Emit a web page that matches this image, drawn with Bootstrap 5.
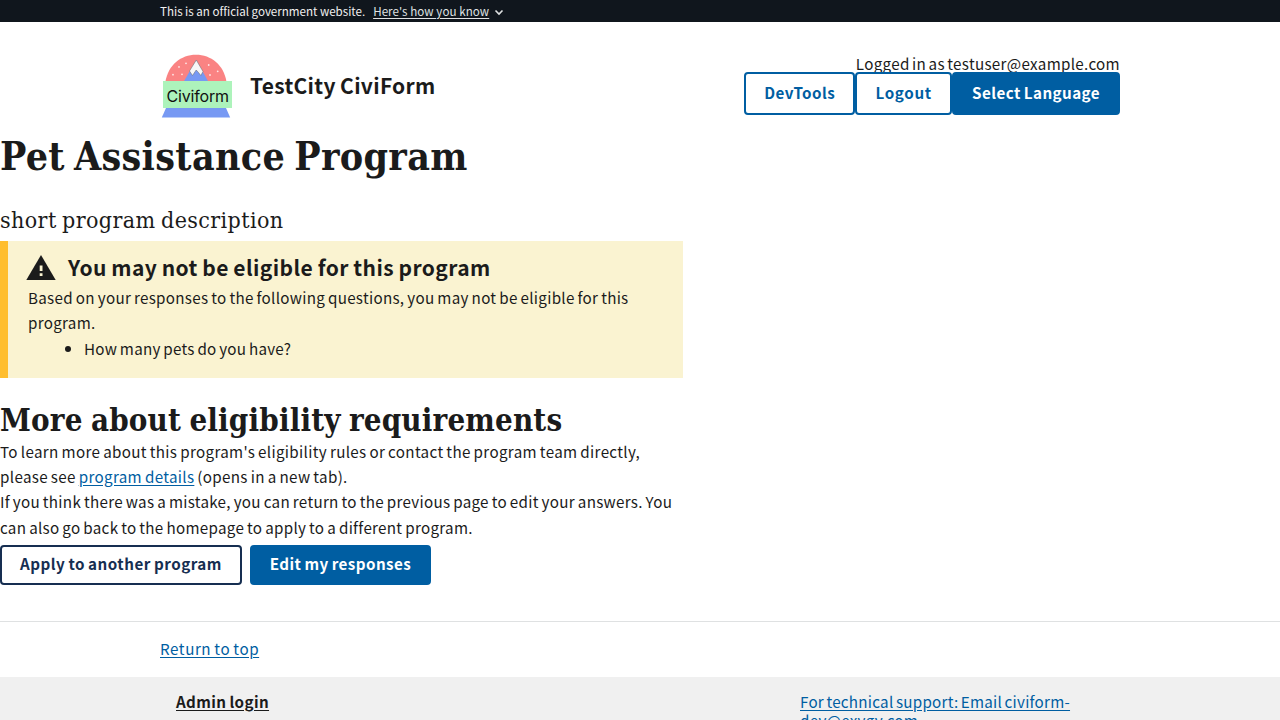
<!DOCTYPE html>
<html lang="en">
<head>
<meta charset="utf-8">
<title>Pet Assistance Program</title>
<meta name="viewport" content="width=device-width, initial-scale=1">
<link href="https://cdn.jsdelivr.net/npm/bootstrap@5.3.0/dist/css/bootstrap.min.css" rel="stylesheet">
<style>
body{font-family:"Noto Sans CJK JP",sans-serif;font-size:15.2px;line-height:25.44px;letter-spacing:.29px;word-spacing:-.8px;color:#1b1b1b;background:#fff}
a{color:#005ea2;text-underline-offset:2px}
.wrap{width:960px;margin:0 auto}
.gov-banner{background:#10161d;color:#f0f0f0;height:22px;font-size:11.6px;line-height:22px;letter-spacing:-.015px;word-spacing:0}
.gov-banner a{color:#dfe1e2;letter-spacing:.06px}
.site-header{height:112px;padding-top:32px}
.logo{display:block;width:72px;height:66px}
.site-name{font-size:21px;font-weight:700;line-height:30px;letter-spacing:.3px;margin:16px 0 0 18px}
.session{height:18px;line-height:18px;letter-spacing:.31px;word-spacing:-1.3px}
.usa-btn{padding:7px 18px 10px;border:2px solid #005ea2;border-radius:4px;background:#fff;color:#005ea2;font-size:15.2px;font-weight:700;line-height:22px;letter-spacing:.42px;white-space:nowrap}
.usa-btn.solid{background:#005ea2;color:#fff}
.usa-btn.navy{border-color:#162e51;color:#162e51}
.session-tools .usa-btn.logout{letter-spacing:.65px;width:97px}
.actions .usa-btn{padding:5px 0 9px}
.apply.usa-btn{width:242px;letter-spacing:.48px}
.edit{width:181px}
.serif{font-family:"DejaVu Serif Condensed","DejaVu Serif",serif;font-stretch:condensed}
h1.serif{font-size:39px;font-weight:700;line-height:44px;letter-spacing:.33px;word-spacing:-3.500px;margin:0}
h2.serif{font-size:31px;font-weight:700;line-height:40px;letter-spacing:.16px;word-spacing:-1.5px;margin:21.500px 0 -1px}
.lede{font-size:23px;line-height:32px;letter-spacing:.4px;word-spacing:-1.5px;margin:26px 0 5px}
.main-col{width:683px}
.notice{border-left:8px solid #ffbe2e;background:#faf3d1;height:137px;padding:11px 20px 0}
.notice h2{font-size:21px;font-weight:700;line-height:30px;letter-spacing:.44px;margin:0 0 3px}
.notice svg{width:30px;height:26px;margin:1px 12px 0 -2px}
.notice ul{padding-left:56px;letter-spacing:.22px}
.learn{letter-spacing:.325px}
.mistake{letter-spacing:.285px}
.actions{margin-top:5px}
.return-row{margin-top:36px;border-top:1px solid #dfe1e2;height:56px;padding-top:13.5px}
.return-row a{letter-spacing:.56px}
.foot{background:#f0f0f0;padding:15px 0 16px;line-height:18.3px}
.foot .wrap{padding-left:16px}
.admin{letter-spacing:.38px}
.support{width:304px;letter-spacing:.25px;word-spacing:-1.2px}
</style>
</head>
<body class="vh-100 overflow-hidden" id="top">
<div class="gov-banner">
  <div class="wrap d-flex align-items-center">
    <span>This is an official government website.</span>
    <a href="#" class="ms-2">Here's how you know</a>
    <svg class="ms-1 mt-1" width="12" height="8" viewBox="0 0 12 8" fill="none" stroke="#dfe1e2" stroke-width="1.6"><path d="M2.500 1.500 6 5l3.500-3.500"/></svg>
  </div>
</div>
<header class="site-header wrap d-flex justify-content-between">
  <div class="d-flex">
    <svg class="logo" viewBox="160 54 72 66" role="img" aria-label="Civiform">
      <path d="M165.400 82C168 65 181 54.800 196 54.800S224 65 226.500 82z" fill="#fa8383"/>
      <path d="M196.300 60 208.500 82h-25z" fill="#7799f3"/>
      <path d="M196.300 60 203 71.500 200.800 75.500 198.500 72.500 196.200 70 192.500 75.500 189.500 71z" fill="#f7f7f8" stroke="#666" stroke-width=".5"/>
      <g fill="#fff" fill-opacity=".8"><circle cx="173" cy="74.700" r=".9"/><circle cx="182" cy="74.300" r=".9"/><circle cx="179" cy="66.900" r=".9"/><circle cx="186" cy="63.300" r=".9"/><circle cx="208.700" cy="65" r=".9"/><circle cx="217.700" cy="71.300" r=".9"/><circle cx="210" cy="75" r=".9"/></g>
      <path d="M166 108h60l4.200 9.500h-68.400z" fill="#7799f3"/>
      <path d="M163 81h69v27h-69z" fill="#adf3bb"/>
      <text x="166.500" y="101.500" font-family="Inter,sans-serif" font-size="16" letter-spacing="0" textLength="62.500" fill="#111">Civiform</text>
    </svg>
    <div class="site-name">TestCity CiviForm</div>
  </div>
  <div class="session-tools text-end">
    <div class="session">Logged in as testuser@example.com</div>
    <div class="d-flex position-relative justify-content-end">
      <a href="#" class="btn usa-btn">DevTools</a>
      <a href="#" class="btn usa-btn logout">Logout</a>
      <a href="#" class="btn usa-btn solid">Select Language</a>
    </div>
  </div>
</header>
<main>
  <h1 class="serif">Pet Assistance Program</h1>
  <p class="serif lede">short program description</p>
  <div class="main-col">
    <section class="notice">
      <h2 class="d-flex align-items-center"><svg viewBox="0 0 30 26"><path d="M15 0 29.700 25H.3z" fill="#1b1b1b"/><path d="M13.700 10.500h2.800V16h-2.800zM13.700 18.200h2.800V21h-2.800z" fill="#faf3d1"/></svg>You may not be eligible for this program</h2>
      <p class="m-0">Based on your responses to the following questions, you may not be eligible for this program.</p>
      <ul class="m-0"><li>How many pets do you have?</li></ul>
    </section>
    <h2 class="serif">More about eligibility requirements</h2>
    <p class="learn m-0">To learn more about this program's eligibility rules or contact the program team directly, please see <a href="#">program details</a> (opens in a new tab).</p>
    <p class="mistake m-0">If you think there was a mistake, you can return to the previous page to edit your answers. You can also go back to the homepage to apply to a different program.</p>
    <div class="actions d-flex gap-2">
      <a href="#" class="btn usa-btn navy apply">Apply to another program</a>
      <a href="#" class="btn usa-btn solid edit">Edit my responses</a>
    </div>
  </div>
</main>
<div class="return-row"><div class="wrap"><a href="#top">Return to top</a></div></div>
<footer class="foot">
  <div class="wrap d-flex justify-content-between">
    <a href="#" class="fw-bold text-reset admin">Admin login</a>
    <a href="#" class="support me-3">For technical support: Email civiform-<br>dev@exygy.com</a>
  </div>
</footer>
<script src="https://cdn.jsdelivr.net/npm/bootstrap@5.3.0/dist/js/bootstrap.bundle.min.js"></script>
</body>
</html>
